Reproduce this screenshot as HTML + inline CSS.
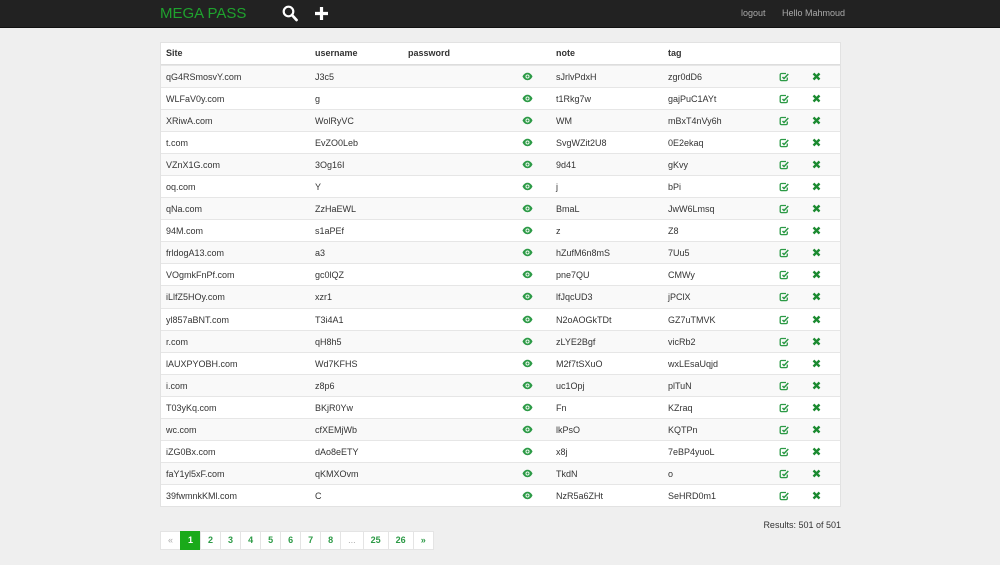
<!DOCTYPE html>
<html><head><meta charset="utf-8"><style>
*{box-sizing:border-box;margin:0;padding:0}
body{width:1000px;height:565px;background:#efefef;font-family:"Liberation Sans",sans-serif;font-size:9px;color:#333;position:relative;overflow:hidden}
.nav{position:absolute;left:0;top:0;width:1000px;height:28px;background:#222;border-bottom:1px solid #111}
.brand{position:absolute;left:160px;top:5px;font-size:15px;color:#1fa22e}
.nav .r{position:absolute;top:8px;color:#aaa;font-size:9px}
.tbl{position:absolute;left:160px;top:42px;width:681px;background:#fff;border:1px solid #e2e2e2}
.row{position:relative;height:22.05px;border-top:1px solid #e6e6e6}
.row:nth-child(even){background:#f9f9f9}
.hd{height:22px;font-weight:bold;border-top:none;border-bottom:1px solid #ddd}
.row span{position:absolute;top:6px;white-space:nowrap}
.hd span{top:5px}
.c1{left:5px}.c2{left:154px}.c3{left:247px}.c5{left:395px}.c6{left:507px}
svg.i{position:absolute}
.pg{position:absolute;left:160px;top:531px;display:flex;height:19px;font-size:9px;font-weight:bold}
.pg div{border:1px solid #e4e4e4;margin-left:-1px;background:#fff;color:#2c9a46;padding:0 7px;line-height:17px;text-align:center;min-width:20px}
.pg .a{background:#1aaa1a;color:#fff;border-color:#1aaa1a}
.pg .g{color:#aaa;font-weight:normal}
.res{position:absolute;right:159px;top:520px;font-size:9px;color:#333}
</style></head><body>
<div class="nav">
<div class="brand">MEGA PASS</div>
<svg style="position:absolute;left:282px;top:5px" width="16" height="17" viewBox="0 0 16 17"><circle cx="6.5" cy="6.5" r="4.8" fill="none" stroke="#fff" stroke-width="2.2"/><path d="M10 10l4.5 5" stroke="#fff" stroke-width="2.8" stroke-linecap="round"/></svg>
<svg style="position:absolute;left:314px;top:6px" width="15" height="15" viewBox="0 0 15 15"><path d="M7.5 1v13M1 7.5h13" stroke="#fff" stroke-width="3.2"/></svg>
<div class="r" style="left:741px">logout</div>
<div class="r" style="left:782px">Hello Mahmoud</div>
</div>
<div class="tbl" id="t">
<div class="row hd"><span class="c1">Site</span><span class="c2">username</span><span class="c3">password</span><span class="c5">note</span><span class="c6">tag</span></div>
</div>
<div class="res">Results: 501 of 501</div>
<div class="pg"><div class="g" style="margin-left:0">«</div><div class="a">1</div><div>2</div><div>3</div><div>4</div><div>5</div><div>6</div><div>7</div><div>8</div><div class="g">...</div><div>25</div><div>26</div><div>»</div></div>
<script>
var d=[["qG4RSmosvY.com","J3c5","sJrlvPdxH","zgr0dD6"],["WLFaV0y.com","g","t1Rkg7w","gajPuC1AYt"],["XRiwA.com","WolRyVC","WM","mBxT4nVy6h"],["t.com","EvZO0Leb","SvgWZit2U8","0E2ekaq"],["VZnX1G.com","3Og16I","9d41","gKvy"],["oq.com","Y","j","bPi"],["qNa.com","ZzHaEWL","BmaL","JwW6Lmsq"],["94M.com","s1aPEf","z","Z8"],["frldogA13.com","a3","hZufM6n8mS","7Uu5"],["VOgmkFnPf.com","gc0lQZ","pne7QU","CMWy"],["iLlfZ5HOy.com","xzr1","lfJqcUD3","jPClX"],["yl857aBNT.com","T3i4A1","N2oAOGkTDt","GZ7uTMVK"],["r.com","qH8h5","zLYE2Bgf","vicRb2"],["lAUXPYOBH.com","Wd7KFHS","M2f7tSXuO","wxLEsaUqjd"],["i.com","z8p6","uc1Opj","plTuN"],["T03yKq.com","BKjR0Yw","Fn","KZraq"],["wc.com","cfXEMjWb","lkPsO","KQTPn"],["iZG0Bx.com","dAo8eETY","x8j","7eBP4yuoL"],["faY1yl5xF.com","qKMXOvm","TkdN","o"],["39fwmnkKMl.com","C","NzR5a6ZHt","SeHRD0m1"]];
var h="";
var eye='<svg class="i" style="left:361px;top:6px" width="11" height="9" viewBox="0 0 11 9"><path d="M0.5 4.5C2 1.5 4 0.8 5.5 0.8S9 1.5 10.5 4.5C9 7.5 7 8.2 5.5 8.2S2 7.5 0.5 4.5Z" fill="#2c9a46"/><circle cx="5.5" cy="4.5" r="2" fill="#fff"/><circle cx="5.5" cy="4.5" r="1.1" fill="#2c9a46"/></svg>';
var ed='<svg class="i" style="left:618px;top:6px" width="10" height="10" viewBox="0 0 10 10"><path d="M7 1.5H2.5a1.3 1.3 0 0 0-1.3 1.3v4.5a1.3 1.3 0 0 0 1.3 1.3H7a1.3 1.3 0 0 0 1.3-1.3V5.5" fill="none" stroke="#2c9a46" stroke-width="1.3"/><path d="M3.5 5l1.5 1.5L9.3 2" fill="none" stroke="#2c9a46" stroke-width="1.5"/></svg>';
var x='<svg class="i" style="left:651px;top:6px" width="9" height="9" viewBox="0 0 9 9"><path d="M1.5 1.5l6 6M7.5 1.5l-6 6" stroke="#1b8a30" stroke-width="2.4"/></svg>';
d.forEach(function(r){h+='<div class="row"><span class="c1">'+r[0]+'</span><span class="c2">'+r[1]+'</span>'+eye+'<span class="c5">'+r[2]+'</span><span class="c6">'+r[3]+'</span>'+ed+x+'</div>';});
document.getElementById("t").insertAdjacentHTML("beforeend",h);
</script>
</body></html>
